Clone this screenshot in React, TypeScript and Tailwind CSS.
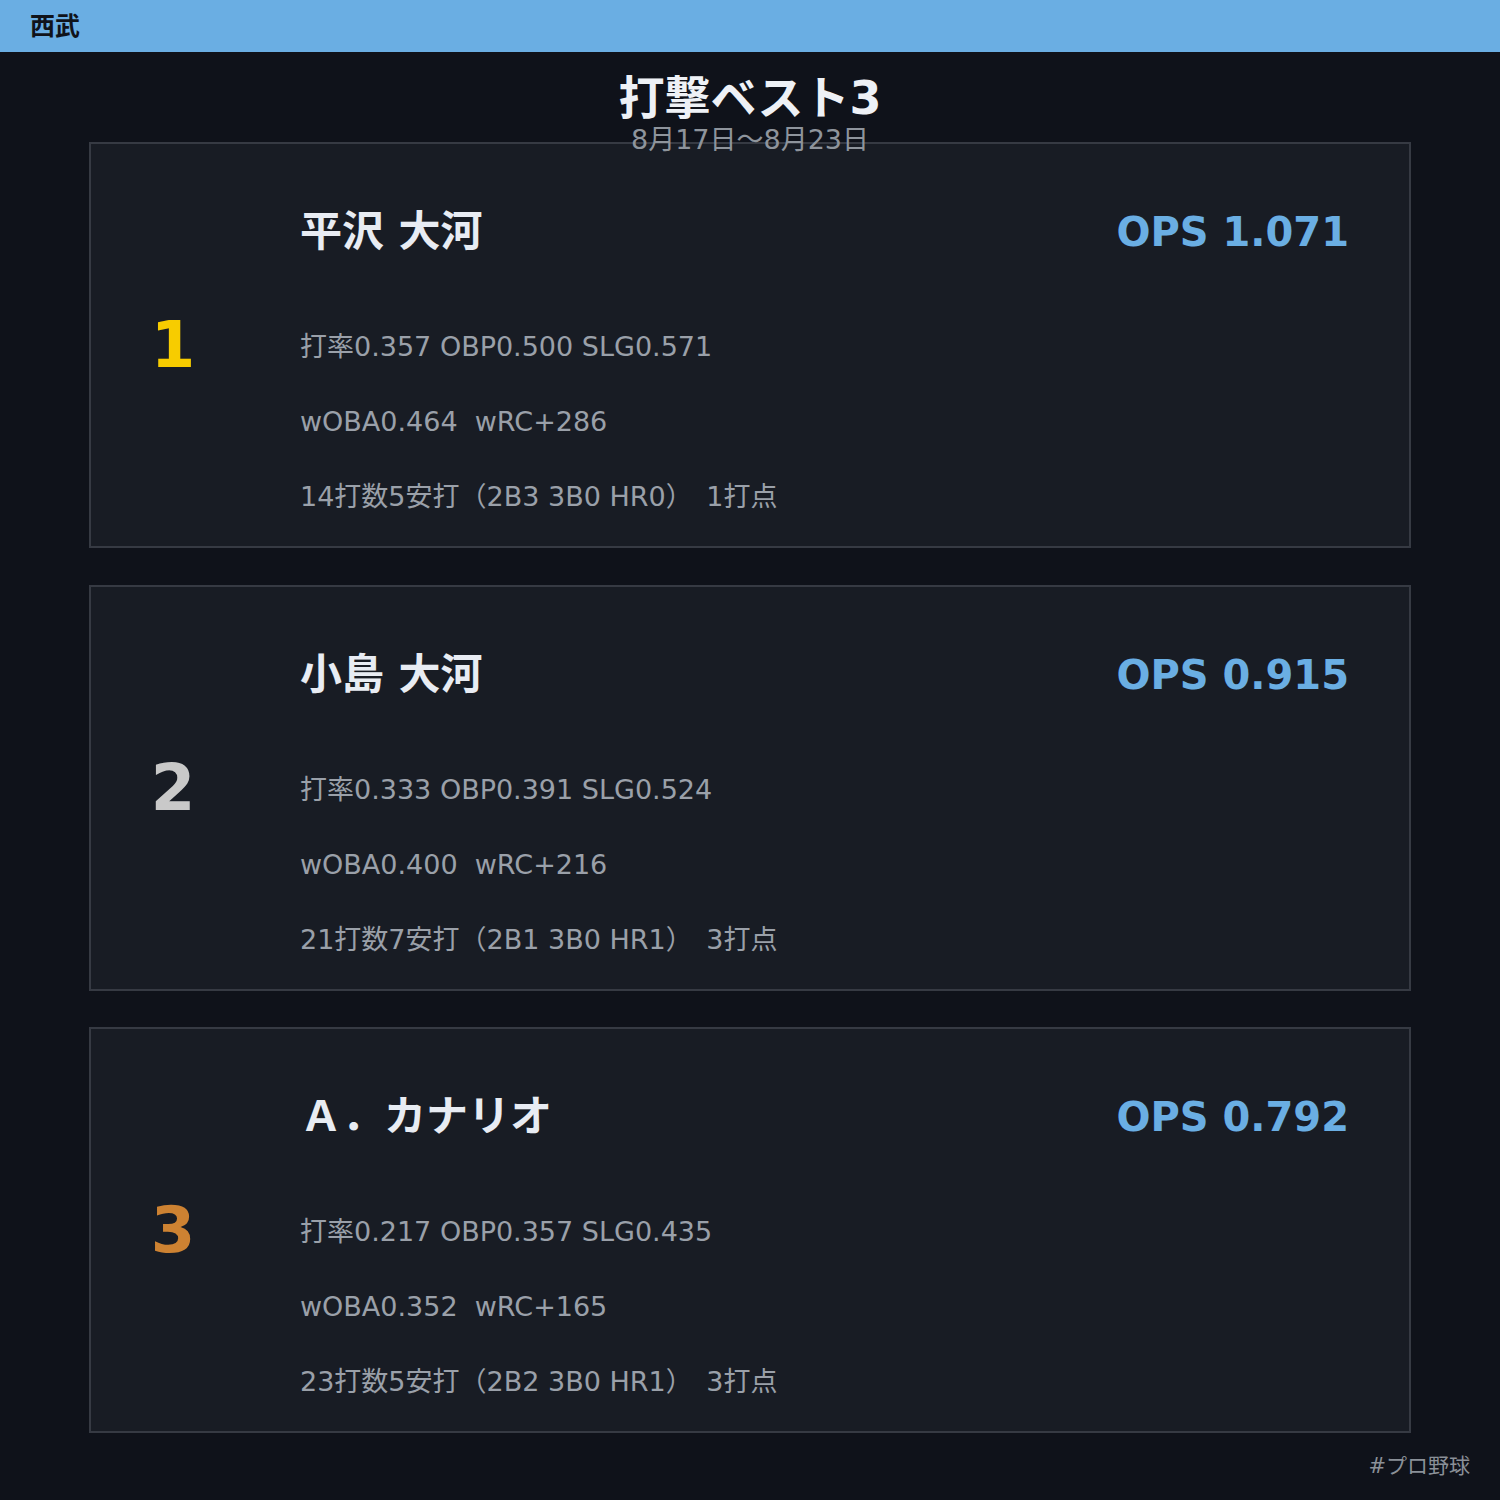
const players = [
  {
    rank: '1',
    rankColor: 'text-[#f7cc00]',
    name: '平沢 大河',
    ops: 'OPS 1.071',
    line1: '打率0.357 OBP0.500 SLG0.571',
    line2: 'wOBA0.464  wRC+286',
    line3: '14打数5安打（2B3 3B0 HR0）　1打点',
  },
  {
    rank: '2',
    rankColor: 'text-[#c9c9c9]',
    name: '小島 大河',
    ops: 'OPS 0.915',
    line1: '打率0.333 OBP0.391 SLG0.524',
    line2: 'wOBA0.400  wRC+216',
    line3: '21打数7安打（2B1 3B0 HR1）　3打点',
  },
  {
    rank: '3',
    rankColor: 'text-[#cd8232]',
    name: 'Ａ．カナリオ',
    ops: 'OPS 0.792',
    line1: '打率0.217 OBP0.357 SLG0.435',
    line2: 'wOBA0.352  wRC+165',
    line3: '23打数5安打（2B2 3B0 HR1）　3打点',
  },
];

const App = () => {
  return (
    <div
      className="w-[1500px] h-[1500px] bg-[#0f121a] flex flex-col"
      style={{ fontFamily: '"DejaVu Sans", "Noto Sans CJK JP", sans-serif' }}
    >
      {/* Header */}
      <div className="h-[52px] bg-[#6aaee3] flex items-center px-[30px]">
        <span className="text-[25px] font-bold text-[#10131a] leading-none">西武</span>
      </div>

      {/* Title */}
      <div className="relative z-10 flex flex-col items-center pt-[19px]">
        <h1 className="text-[46px] leading-[54px] font-bold text-[#eef1f6]">打撃ベスト3</h1>
        <p className="text-[27px] leading-[30px] text-[#8e949c]">8月17日〜8月23日</p>
      </div>

      {/* Cards */}
      <div className="w-[1322px] mx-auto mt-[-13px] flex flex-col gap-[36.5px]">
        {players.map((p) => (
          <div
            key={p.rank}
            className="h-[406px] bg-[#181c24] border-2 border-[#363a43] flex items-center"
          >
            <div className={`w-[164px] text-center text-[64px] font-bold leading-none ${p.rankColor}`}>
              {p.rank}
            </div>
            <div className="flex-1 ml-[45px] pr-[60px] self-stretch flex flex-col pt-[60px]">
              <div className="h-[56px] flex items-center justify-between">
                <span className="text-[42px] font-bold text-[#e8ecf3] leading-none">{p.name}</span>
                <span className="text-[40px] font-bold text-[#6aaee3] leading-none">{p.ops}</span>
              </div>
              <div className="mt-[49px] text-[27px] text-[#9aa0a9] whitespace-pre">
                <p className="h-[75px] leading-[75px]">{p.line1}</p>
                <p className="h-[75px] leading-[75px]">{p.line2}</p>
                <p className="h-[75px] leading-[75px]">{p.line3}</p>
              </div>
            </div>
          </div>
        ))}
      </div>

      {/* Footer */}
      <div className="flex-1 flex items-center justify-end pr-[30px]">
        <span className="text-[21px] text-[#8a9098]">#プロ野球</span>
      </div>
    </div>
  );
};

export default App;
